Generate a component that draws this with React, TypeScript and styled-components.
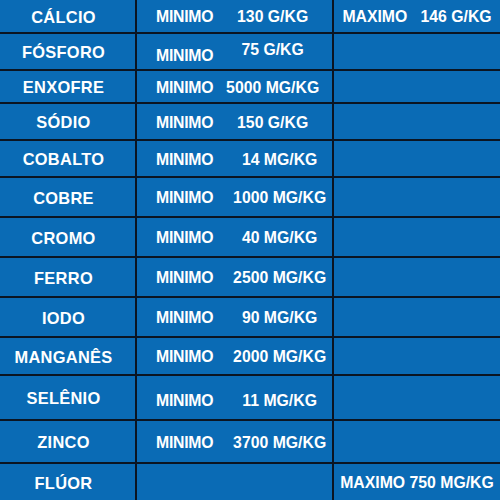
import { Fragment } from 'react';
import styled, { createGlobalStyle } from 'styled-components';

const GlobalStyle = createGlobalStyle`
  html, body {
    margin: 0;
    padding: 0;
    background: #0b1522;
  }
`;

type Row = {
  name: string;
  min?: string;
  max?: string;
  height: number;
  shift?: number;
  minDy?: number;
  valueDy?: number;
};

const ROWS: Row[] = [
  { name: 'CÁLCIO', min: '130 G/KG', max: 'MAXIMO\u00a0\u00a0 146 G/KG', height: 32 },
  { name: 'FÓSFORO', min: '75 G/KG', height: 35, minDy: 3, valueDy: -3 },
  { name: 'ENXOFRE', min: '5000 MG/KG', height: 31 },
  { name: 'SÓDIO', min: '150 G/KG', height: 35 },
  { name: 'COBALTO', min: '14 MG/KG', height: 35, shift: 14 },
  { name: 'COBRE', min: '1000 MG/KG', height: 38, shift: 14 },
  { name: 'CROMO', min: '40 MG/KG', height: 38, shift: 14 },
  { name: 'FERRO', min: '2500 MG/KG', height: 38, shift: 14 },
  { name: 'IODO', min: '90 MG/KG', height: 38, shift: 14 },
  { name: 'MANGANÊS', min: '2000 MG/KG', height: 36, shift: 14 },
  { name: 'SELÊNIO', min: '11 MG/KG', height: 43, shift: 14, minDy: 2, valueDy: 2 },
  { name: 'ZINCO', min: '3700 MG/KG', height: 41, shift: 14 },
  { name: 'FLÚOR', max: 'MAXIMO 750 MG/KG', height: 36 },
];

const Table = styled.div<{ $rows: string }>`
  display: grid;
  grid-template-columns: 135px 195px 1fr;
  grid-template-rows: ${(p) => p.$rows};
  gap: 2px;
  width: 500px;
  height: 500px;
  background: #0b1522;
  font-family: 'Liberation Sans', Arial, sans-serif;
  font-weight: 700;
  font-size: 15.8px;
  color: #ffffff;
`;

const Cell = styled.div`
  display: flex;
  align-items: center;
  background: #0a6bb5;
  padding-top: 2px;
  white-space: nowrap;
  box-sizing: border-box;
`;

const NameCell = styled(Cell)`
  justify-content: center;
  padding-right: 8px;
  font-size: 16.4px;
  letter-spacing: 0.3px;
`;

const MinCell = styled(Cell)`
  padding-left: 19px;
`;

const MaxCell = styled(Cell)`
  justify-content: center;
`;

const Label = styled.span<{ $dy?: number }>`
  letter-spacing: -0.25px;
  transform: translateY(${(p) => p.$dy ?? 0}px);
`;

const Value = styled.span<{ $shift?: number; $dy?: number }>`
  flex: 1;
  text-align: center;
  padding-left: ${(p) => p.$shift ?? 0}px;
  transform: translateY(${(p) => p.$dy ?? 0}px);
`;

export default function App() {
  return (
    <>
      <GlobalStyle />
      <Table $rows={ROWS.map((r) => `${r.height}px`).join(' ')}>
        {ROWS.map((r) => (
          <Fragment key={r.name}>
            <NameCell>{r.name}</NameCell>
            <MinCell>
              {r.min && (
                <>
                  <Label $dy={r.minDy}>MINIMO</Label>
                  <Value $shift={r.shift} $dy={r.valueDy}>
                    {r.min}
                  </Value>
                </>
              )}
            </MinCell>
            <MaxCell>{r.max}</MaxCell>
          </Fragment>
        ))}
      </Table>
    </>
  );
}
